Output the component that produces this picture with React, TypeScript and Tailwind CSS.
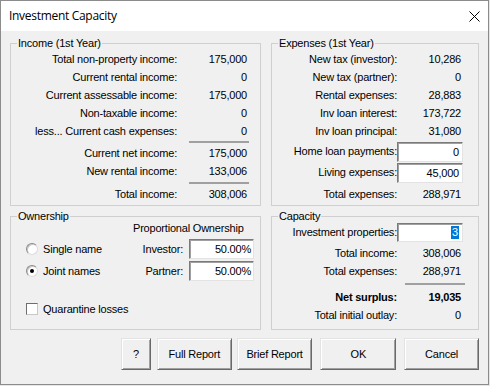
import React from "react";

// sunken edit box (classic win32 look)
const editBox =
  "bg-white border border-t-[#7a7a7a] border-l-[#7a7a7a] border-r-[#e3e3e3] border-b-[#e3e3e3] shadow-[inset_1px_1px_0_#a0a0a0]";

const button =
  "h-[32px] bg-[#f0f0f0] border border-t-[#e3e3e3] border-l-[#e3e3e3] border-r-[#696969] border-b-[#696969] shadow-[inset_1px_1px_0_#ffffff,inset_-1px_-1px_0_#a0a0a0] flex items-center justify-center";

const Group = ({
  title,
  className,
  children,
}: {
  title: string;
  className: string;
  children: React.ReactNode;
}) => (
  <div className={`relative border border-[#cfcfcf] ${className}`}>
    <span className="absolute left-[6px] -top-[8px] bg-[#f0f0f0] px-[1px] leading-[14px]">
      {title}
    </span>
    {children}
  </div>
);

// income column line
const IncLine = ({ label, value }: { label: string; value: string }) => (
  <div className="flex h-[18px] items-center">
    <span className="w-[166px] text-right">{label}</span>
    <span className="ml-[12px] w-[58px] text-right">{value}</span>
  </div>
);

// right column line (expenses / capacity)
const RLine = ({
  label,
  value,
  bold,
}: {
  label: string;
  value: string;
  bold?: boolean;
}) => (
  <div className={`flex h-[18px] items-center ${bold ? "font-bold" : ""}`}>
    <span className="w-[125px] text-right">{label}</span>
    <span className="w-[66px] pr-[2px] text-right">{value}</span>
  </div>
);

const BoxLine = ({ label, value }: { label: string; value: string }) => (
  <div className="flex h-[21px] items-center">
    <span className="w-[125px] text-right">{label}</span>
    <span className={`${editBox} h-[20px] w-[66px] pr-[3px] text-right leading-[18px]`}>
      {value}
    </span>
  </div>
);

const Sep = ({ className }: { className: string }) => (
  <div className={`h-[2px] border-t-2 border-[#a0a0a0] ${className}`} />
);

const Radio = ({ checked }: { checked?: boolean }) => (
  <span className="flex h-[12px] w-[12px] items-center justify-center rounded-full border border-[#dcdcdc] border-t-[#8a8a8a] border-l-[#8a8a8a] bg-white shadow-[inset_1px_1px_0_#c8c8c8]">
    {checked && <span className="h-[4px] w-[4px] rounded-full bg-black" />}
  </span>
);

const App = () => {
  return (
    <div className="h-[386px] w-[490px] overflow-hidden bg-[#e6e6e6] font-['Liberation_Sans',Arial,sans-serif] text-[11px] tracking-[-0.2px] text-black">
      <div className="flex h-[385px] w-[489px] flex-col border border-[#8c8c8c] bg-[#f0f0f0]">
        {/* title bar */}
        <div className="flex h-[30px] items-center justify-between bg-white pl-[8px] pr-[8px]">
          <span className="font-['Open_Sans',sans-serif] text-[12px] tracking-[-0.3px]">
            Investment Capacity
          </span>
          <svg width="11" height="11" viewBox="0 0 11 11">
            <path d="M0.5 0.5 L10.5 10.5 M10.5 0.5 L0.5 10.5" stroke="#000" strokeWidth="1" />
          </svg>
        </div>

        <div className="flex flex-col px-[9px] pt-[12px]">
          <div className="flex gap-[10px]">
            <Group title="Income (1st Year)" className="h-[163px] w-[251px] pt-[6px]">
              <IncLine label="Total non-property income:" value="175,000" />
              <IncLine label="Current rental income:" value="0" />
              <IncLine label="Current assessable income:" value="175,000" />
              <IncLine label="Non-taxable income:" value="0" />
              <IncLine label="less... Current cash expenses:" value="0" />
              <Sep className="ml-[178px] mt-[1px] mb-[1px] w-[60px]" />
              <IncLine label="Current net income:" value="175,000" />
              <IncLine label="New rental income:" value="133,006" />
              <Sep className="ml-[178px] mt-[2px] mb-[1px] w-[60px]" />
              <IncLine label="Total income:" value="308,006" />
            </Group>

            <Group title="Expenses (1st Year)" className="h-[163px] w-[208px] pt-[6px]">
              <RLine label="New tax (investor):" value="10,286" />
              <RLine label="New tax (partner):" value="0" />
              <RLine label="Rental expenses:" value="28,883" />
              <RLine label="Inv loan interest:" value="173,722" />
              <RLine label="Inv loan principal:" value="31,080" />
              <div className="mt-[1px]">
                <BoxLine label="Home loan payments:" value="0" />
                <BoxLine label="Living expenses:" value="45,000" />
              </div>
              <div className="mt-[2px]">
                <RLine label="Total expenses:" value="288,971" />
              </div>
            </Group>
          </div>

          <div className="mt-[10px] flex gap-[10px]">
            <Group title="Ownership" className="h-[114px] w-[251px] pt-[4px]">
              <div className="pl-[122px] leading-[14px]">Proportional Ownership</div>
              <div className="mt-[4px] flex h-[20px] items-center">
                <div className="flex w-[120px] items-center pl-[15px]">
                  <Radio />
                  <span className="ml-[5px]">Single name</span>
                </div>
                <span className="w-[52px] text-right">Investor:</span>
                <span className={`${editBox} ml-[6px] h-[20px] w-[65px] pr-[2px] text-right leading-[18px]`}>
                  50.00%
                </span>
              </div>
              <div className="mt-[2px] flex h-[20px] items-center">
                <div className="flex w-[120px] items-center pl-[15px]">
                  <Radio checked />
                  <span className="ml-[5px]">Joint names</span>
                </div>
                <span className="w-[52px] text-right">Partner:</span>
                <span className={`${editBox} ml-[6px] h-[20px] w-[65px] pr-[2px] text-right leading-[18px]`}>
                  50.00%
                </span>
              </div>
              <div className="mt-[20px] flex h-[16px] items-center pl-[15px]">
                <span className="h-[12px] w-[12px] border border-t-[#6e6e6e] border-l-[#6e6e6e] border-r-[#c8c8c8] border-b-[#c8c8c8] bg-white" />
                <span className="ml-[5px]">Quarantine losses</span>
              </div>
            </Group>

            <Group title="Capacity" className="h-[114px] w-[208px] pt-[6px]">
              <div className="flex h-[19px] items-center">
                <span className="w-[125px] text-right">Investment properties:</span>
                <span className={`${editBox} flex h-[19px] w-[66px] items-center justify-end pr-[3px]`}>
                  <span className="bg-[#0078d7] px-[1px] leading-[13px] text-white">3</span>
                </span>
              </div>
              <div className="mt-[2px]">
                <RLine label="Total income:" value="308,006" />
                <RLine label="Total expenses:" value="288,971" />
              </div>
              <Sep className="ml-[133px] mt-[3px] mb-[3px] w-[60px]" />
              <RLine label="Net surplus:" value="19,035" bold />
              <RLine label="Total initial outlay:" value="0" />
            </Group>
          </div>

          <div className="mt-[8px] flex">
            <button className={`${button} ml-[111px] w-[30px]`}>?</button>
            <button className={`${button} ml-[6px] w-[75px]`}>Full Report</button>
            <button className={`${button} ml-[5px] w-[76px]`}>Brief Report</button>
            <button className={`${button} ml-[8px] w-[76px]`}>OK</button>
            <button className={`${button} ml-[8px] w-[75px]`}>Cancel</button>
          </div>
        </div>
      </div>
    </div>
  );
};

export default App;
